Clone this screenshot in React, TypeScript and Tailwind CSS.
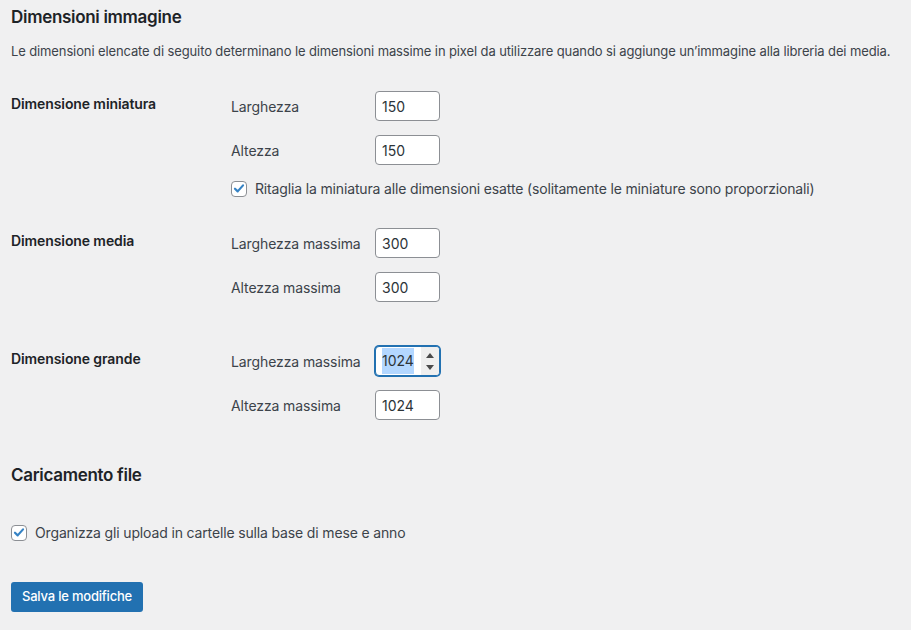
const font = "font-['Inter','Noto_Sans',sans-serif]";

function Check() {
  return (
    <span className="flex h-4 w-4 shrink-0 items-center justify-center rounded-[4px] border border-[#8c8f94] bg-white">
      <svg viewBox="0 0 16 16" className="h-[15px] w-[15px]">
        <path d="M3.4 8.2 L6.5 11.3 L12.6 4.4" fill="none" stroke="#3582c4" strokeWidth="2.5" strokeLinecap="round" strokeLinejoin="round" />
      </svg>
    </span>
  );
}

function NumField({ label, value }: { label: string; value: string }) {
  return (
    <div className="mb-[14px] flex h-[30px] items-center">
      <span className="w-[144px] text-[14px] tracking-[-0.1px] text-[#3c434a]">{label}</span>
      <div className="flex h-[30px] w-[65px] items-center rounded-[4px] border border-[#8c8f94] bg-white px-[6px] text-[14px] text-[#2c3338]">
        {value}
      </div>
    </div>
  );
}

function FocusedField({ label, value }: { label: string; value: string }) {
  return (
    <div className="mb-[14px] flex h-[30px] items-center">
      <span className="w-[144px] text-[14px] tracking-[-0.1px] text-[#3c434a]">{label}</span>
      <div className="flex h-[30px] w-[65px] items-center overflow-hidden rounded-[4px] border border-[#2271b1] bg-white pl-[6px] text-[14px] text-[#2c3338] shadow-[0_0_0_1px_#2271b1]">
        <span className="w-[32px] bg-[#b3d7ff] leading-[26px]">{value}</span>
        <span className="ml-[7px] flex h-full w-[18px] flex-col items-center justify-center gap-[7px] bg-[#efefef]">
          <svg viewBox="0 0 8 5" className="h-[5px] w-[8px]"><path d="M0 5 L4 0 L8 5 Z" fill="#4a4a4a" /></svg>
          <svg viewBox="0 0 8 5" className="h-[5px] w-[8px]"><path d="M0 0 L4 5 L8 0 Z" fill="#4a4a4a" /></svg>
        </span>
      </div>
    </div>
  );
}

function Row({ title, children }: { title: string; children: React.ReactNode }) {
  return (
    <div className="flex">
      <div className="w-[220px] pt-[19px] text-[14px] font-semibold leading-[18px] tracking-[-0.1px] text-[#1d2327]">{title}</div>
      <div className="py-[15px]">{children}</div>
    </div>
  );
}

export default function App() {
  return (
    <div className={`min-h-screen bg-[#f0f0f1] px-[11px] pt-[6px] ${font}`}>
      <h2 className="text-[17px] font-semibold leading-[23px] tracking-[-0.3px] text-[#1d2327]">Dimensioni immagine</h2>
      <p className="mt-[13px] whitespace-nowrap text-[13px] leading-[19px] tracking-[-0.12px] text-[#3c434a]">
        Le dimensioni elencate di seguito determinano le dimensioni massime in pixel da utilizzare quando si aggiunge un’immagine alla libreria dei media.
      </p>

      <div className="mt-[15px]">
        <Row title="Dimensione miniatura">
          <NumField label="Larghezza" value="150" />
          <NumField label="Altezza" value="150" />
          <label className="flex h-[19px] items-center gap-[8px] text-[14px] tracking-[-0.15px] text-[#3c434a]">
            <Check />
            Ritaglia la miniatura alle dimensioni esatte (solitamente le miniature sono proporzionali)
          </label>
        </Row>
        <Row title="Dimensione media">
          <NumField label="Larghezza massima" value="300" />
          <NumField label="Altezza massima" value="300" />
        </Row>
        <Row title="Dimensione grande">
          <FocusedField label="Larghezza massima" value="1024" />
          <NumField label="Altezza massima" value="1024" />
        </Row>
      </div>

      <h2 className="mt-[15px] text-[17px] font-semibold leading-[23px] tracking-[-0.3px] text-[#1d2327]">Caricamento file</h2>
      <label className="mt-[36px] flex h-[19px] items-center gap-[8px] text-[14px] tracking-[-0.15px] text-[#3c434a]">
        <Check />
        Organizza gli upload in cartelle sulla base di mese e anno
      </label>

      <button className="mt-[40px] flex h-[30px] w-[132px] items-center justify-center rounded-[3px] bg-[#2271b1] text-[13px] font-medium tracking-[-0.2px] text-white">
        Salva le modifiche
      </button>
    </div>
  );
}
